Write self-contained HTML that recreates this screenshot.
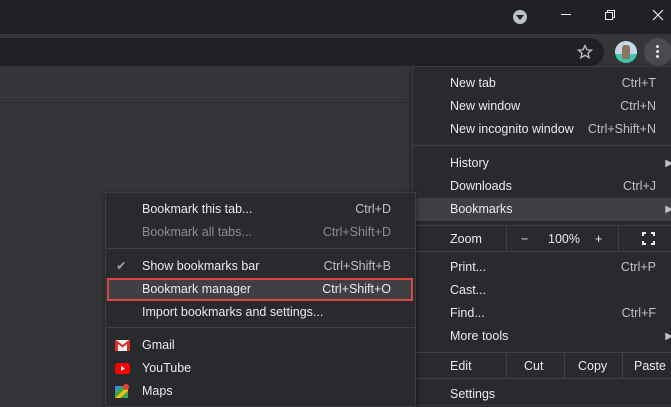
<!DOCTYPE html><html><head><style>
*{margin:0;padding:0;box-sizing:border-box}
body{width:671px;height:403px;overflow:hidden;background:#35363a;position:relative;font-family:"Liberation Sans",sans-serif;font-size:12.5px;color:#e8eaed}
.a{position:absolute}
.menu{position:absolute;background:#292a2d;border:1px solid #3c3d40;box-shadow:0 2px 6px rgba(0,0,0,.5)}
.r{position:absolute;left:0;right:0;height:23px;line-height:23px}
.r .t{position:absolute}
.r .s{position:absolute;color:#bdc1c6}
.sep{position:absolute;left:0;right:0;height:1px;background:#3f4044}
</style></head><body>
<div class="a" style="left:0;top:0;width:671px;height:34px;background:#202124"></div>
<div class="a" style="left:0;top:38px;width:604px;height:28px;background:#202124;border-radius:0 14px 14px 0"></div>
<div class="a" style="left:0;top:102px;width:412px;height:1px;background:#2a2b2e"></div>
<div class="a" style="left:513px;top:10px;width:14px;height:14px;border-radius:50%;background:#bdc1c6"></div>
<div class="a" style="left:516px;top:15px;width:0;height:0;border-left:4px solid transparent;border-right:4px solid transparent;border-top:5px solid #202124"></div>
<div class="a" style="left:561px;top:14px;width:10px;height:1px;background:#e8eaed"></div>
<svg class="a" style="left:604px;top:9px" width="12" height="12"><rect x="1.5" y="3.5" width="7" height="7" fill="none" stroke="#e8eaed"/><path d="M3.5 3.5V1.5h7v7h-2" fill="none" stroke="#e8eaed"/></svg>
<svg class="a" style="left:651px;top:8px" width="14" height="14"><path d="M2 2L12 12M12 2L2 12" stroke="#e8eaed" stroke-width="1.2"/></svg>
<svg class="a" style="left:577px;top:44px" width="16" height="16"><path d="M8 1.5l1.9 4.3 4.6.4-3.5 3 1.1 4.5L8 11.3 3.9 13.7 5 9.2 1.5 6.2l4.6-.4z" fill="none" stroke="#bdc1c6" stroke-width="1.3"/></svg>
<div class="a" style="left:615px;top:41px;width:22px;height:22px;border-radius:50%;background:linear-gradient(#c8d8e8 60%,#3cc8b0 60%)"></div>
<div class="a" style="left:622px;top:45px;width:8px;height:14px;background:#8a7560;border-radius:3px 3px 1px 1px"></div>
<div class="a" style="left:644px;top:38px;width:28px;height:28px;border-radius:50%;background:#4a4b4f"></div>
<div class="a" style="left:656px;top:45px;width:3px;height:3px;background:#e8eaed;border-radius:50%;box-shadow:0 5px 0 #e8eaed,0 10px 0 #e8eaed"></div>

<div class="menu" style="left:412px;top:66px;width:262px;height:340px">
<div class="r" style="top:5px"><span class="t" style="left:37px">New tab</span><span class="s" style="right:17px">Ctrl+T</span></div>
<div class="r" style="top:28px"><span class="t" style="left:37px">New window</span><span class="s" style="right:17px">Ctrl+N</span></div>
<div class="r" style="top:51px"><span class="t" style="left:37px">New incognito window</span><span class="s" style="right:17px">Ctrl+Shift+N</span></div>
<div class="sep" style="top:78px"></div>
<div class="r" style="top:85px"><span class="t" style="left:37px">History</span><span class="s" style="right:0;font-size:10px">▶</span></div>
<div class="r" style="top:108px"><span class="t" style="left:37px">Downloads</span><span class="s" style="right:17px">Ctrl+J</span></div>
<div class="r" style="top:131px;background:#3f4043"><span class="t" style="left:37px">Bookmarks</span><span class="s" style="right:0;font-size:10px">▶</span></div>
<div class="sep" style="top:158px"></div>
<div class="r" style="top:160px;height:24px;line-height:24px"><span class="t" style="left:37px">Zoom</span><span class="t" style="left:108px">−</span><span class="t" style="left:135px">100%</span><span class="t" style="left:182px">+</span></div>
<svg class="a" style="left:229px;top:165px" width="13" height="13"><path d="M1 4V1h3M9 1h3v3M12 9v3H9M4 12H1V9" fill="none" stroke="#e8eaed" stroke-width="2"/></svg>
<div class="a" style="left:93px;top:158px;width:1px;height:26px;background:#3f4044"></div>
<div class="a" style="left:205px;top:158px;width:1px;height:26px;background:#3f4044"></div>
<div class="sep" style="top:184px"></div>
<div class="r" style="top:189px"><span class="t" style="left:37px">Print...</span><span class="s" style="right:17px">Ctrl+P</span></div>
<div class="r" style="top:212px"><span class="t" style="left:37px">Cast...</span></div>
<div class="r" style="top:235px"><span class="t" style="left:37px">Find...</span><span class="s" style="right:17px">Ctrl+F</span></div>
<div class="r" style="top:258px"><span class="t" style="left:37px">More tools</span><span class="s" style="right:0;font-size:10px">▶</span></div>
<div class="sep" style="top:285px"></div>
<div class="r" style="top:287px;height:24px;line-height:24px"><span class="t" style="left:37px">Edit</span><span class="t" style="left:111px">Cut</span><span class="t" style="left:165px">Copy</span><span class="t" style="left:221px">Paste</span></div>
<div class="a" style="left:93px;top:285px;width:1px;height:26px;background:#3f4044"></div>
<div class="a" style="left:151px;top:285px;width:1px;height:26px;background:#3f4044"></div>
<div class="a" style="left:209px;top:285px;width:1px;height:26px;background:#3f4044"></div>
<div class="sep" style="top:311px"></div>
<div class="r" style="top:316px"><span class="t" style="left:37px">Settings</span></div>
</div>

<div class="menu" style="left:105px;top:192px;width:311px;height:215px">
<div class="r" style="top:5px"><span class="t" style="left:36px">Bookmark this tab...</span><span class="s" style="right:24px">Ctrl+D</span></div>
<div class="r" style="top:28px;color:#8a8d91"><span class="t" style="left:36px">Bookmark all tabs...</span><span class="s" style="right:24px;color:#8a8d91">Ctrl+Shift+D</span></div>
<div class="sep" style="top:55px"></div>
<div class="r" style="top:62px"><span class="t" style="left:10px;color:#9aa0a6">✔</span><span class="t" style="left:36px">Show bookmarks bar</span><span class="s" style="right:24px">Ctrl+Shift+B</span></div>
<div class="r" style="top:85px;background:#3f4043;left:1px;right:2px;border:2px solid #e0443e;line-height:19px"><span class="t" style="left:33px">Bookmark manager</span><span class="s" style="right:20px;color:#e8eaed">Ctrl+Shift+O</span></div>
<div class="r" style="top:108px"><span class="t" style="left:36px">Import bookmarks and settings...</span></div>
<div class="sep" style="top:134px"></div>
<div class="r" style="top:141px"><span class="t" style="left:36px">Gmail</span></div>
<div class="r" style="top:164px"><span class="t" style="left:36px">YouTube</span></div>
<div class="r" style="top:187px"><span class="t" style="left:36px">Maps</span></div>
<svg class="a" style="left:9px;top:147px" width="15" height="11"><rect width="15" height="11" fill="#eee"/><path d="M0 0v11h3V4l4.5 3.5L12 4v7h3V0h-1L7.5 5 1 0z" fill="#d93025"/></svg>
<svg class="a" style="left:9px;top:170px" width="15" height="11"><rect width="15" height="11" rx="3" fill="#f00"/><path d="M6 3v5l4-2.5z" fill="#fff"/></svg>
<svg class="a" style="left:9px;top:191px" width="15" height="14"><rect y="2" width="13" height="12" fill="#34a853"/><path d="M0 14L13 2v5L5 14z" fill="#fbbc04"/><path d="M0 2h6L0 8z" fill="#4285f4"/><circle cx="11" cy="3" r="3" fill="#ea4335"/></svg>
</div>
</body></html>
